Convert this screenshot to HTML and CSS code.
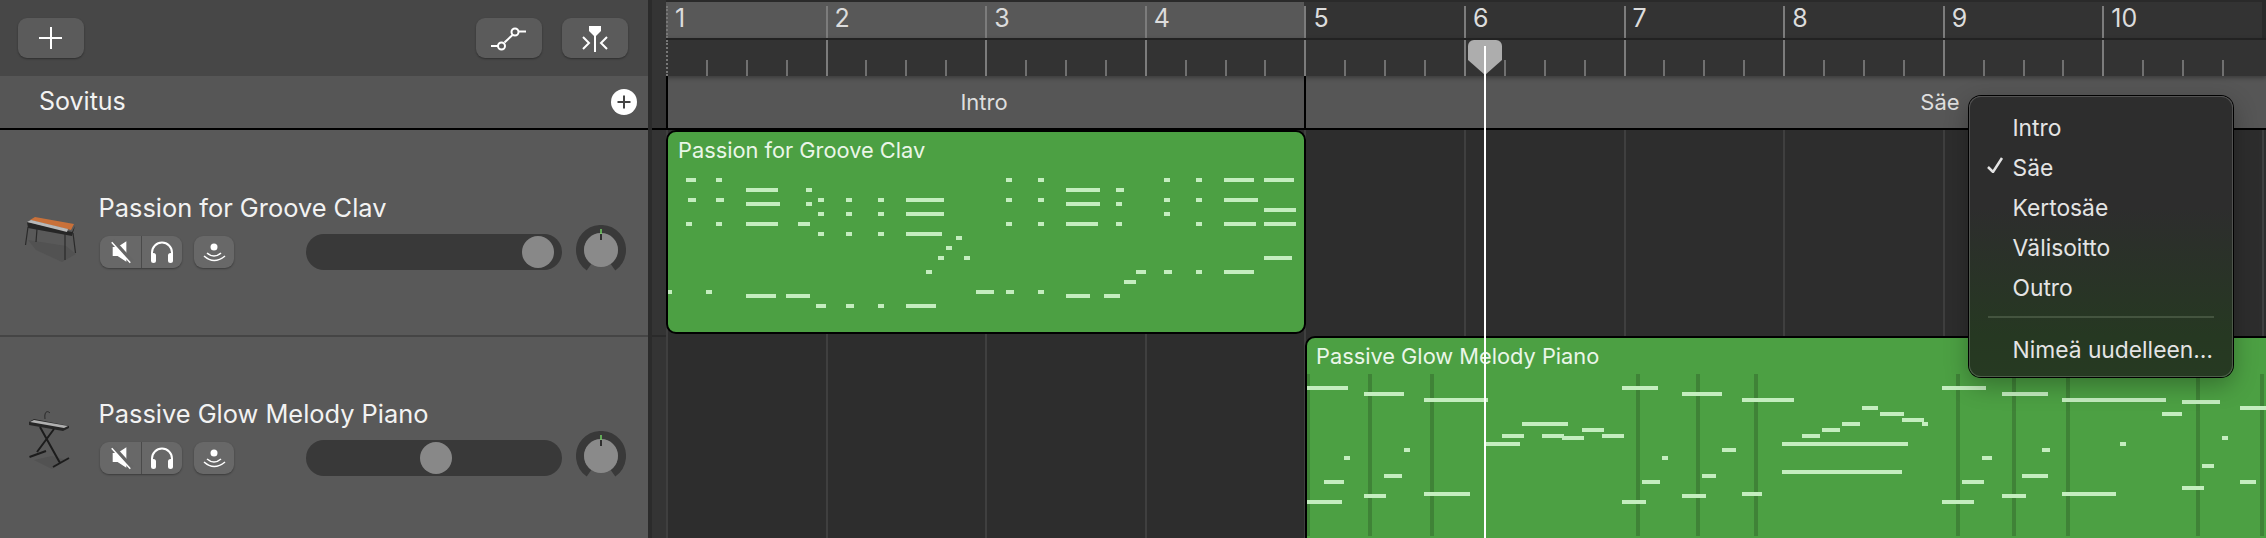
FILE: index.html
```html
<!DOCTYPE html>
<html lang="fi">
<head>
    <meta charset="UTF-8">
    <title>Sovitus</title>
    <link rel="stylesheet" href="styles.css">
</head>
<body>
    <div class="sidebar">
        <div class="toolbar">
            <button class="tool-btn">
                <svg width="66" height="40" viewBox="0 0 66 40"><path d="M33 9V31M21 20H44" class="line"/></svg>
            </button>
            <div class="toolbar-right">
                <button class="tool-btn">
                    <svg width="66" height="40" viewBox="0 0 66 40"><path d="M15 28H22M28.5 24.5L36.5 17M43 13.500H50" class="line"/><circle cx="25.500" cy="28" r="3.500" class="line"/><circle cx="39" cy="14" r="3.500" class="line"/></svg>
                </button>
                <button class="tool-btn">
                    <svg width="66" height="40" viewBox="0 0 66 40"><path d="M27 8H39V13L34 18H32L27 13Z" fill="#fff"/><path d="M33 16V34M21 19L27 25L21 31M45 19L39 25L45 31" class="line"/></svg>
                </button>
            </div>
        </div>
        <div class="arrange-head">
            <span>Sovitus</span>
            <svg width="26" height="26" viewBox="0 0 26 26"><circle cx="13" cy="13" r="13" fill="#fff"/><path d="M13 6.500V19.500M6.500 13H19.500" stroke="#444" stroke-width="2"/></svg>
        </div>

        <div class="track">
            <svg class="track-icon" width="60" height="70" viewBox="24 198 60 70">
                <path d="M28 240L66 246L76 254L62 262L36 250Z" fill="#525252"/>
                <path d="M27 222L72 232L75 226L72 236L28 228Z" fill="#262626"/>
                <path d="M30 220L35 217L74 224L71 230Z" fill="#c9713a"/>
                <path d="M27 222L31 220L68 229L67 232Z" fill="#b8b8b8"/>
                <path d="M28 227L25.500 245M37 229L36 242M65 233V260M73 233L75.500 253" stroke="#2a2a2a" stroke-width="1.200" fill="none"/>
            </svg>
            <div class="track-body">
                <div class="track-name">Passion for Groove Clav</div>
                <div class="track-controls">
                    <div class="btn-group">
                        <button class="mini-btn mute">
                            <svg width="42" height="32" viewBox="0 0 42 32"><path d="M13 11H18L27 5V26L18 20H13Z" fill="#fff"/><path d="M13 4L33 26" stroke="#666" stroke-width="4"/><path d="M12 6L31 27" stroke="#fff" stroke-width="1.500"/></svg>
                        </button>
                        <button class="mini-btn solo">
                            <svg width="40" height="32" viewBox="0 0 40 32"><path d="M10 23V16.500A10 10 0 0 1 30 16.500V23" class="line"/><rect x="9" y="17" width="5" height="10" rx="2.500" fill="#fff"/><rect x="26" y="17" width="5" height="10" rx="2.500" fill="#fff"/></svg>
                        </button>
                    </div>
                    <button class="mini-btn monitor">
                        <svg width="40" height="32" viewBox="0 0 40 32"><circle cx="20" cy="11" r="3.500" fill="#fff"/><path d="M13 17Q20 23 27 17M10 20Q20 29 31 20" class="line thin"/></svg>
                    </button>
                    <div class="slider"><div class="thumb" style="margin-left:216px"></div></div>
                    <svg class="knob" width="50" height="54" viewBox="0 0 50 54"><path d="M13 42.200A21 21 0 1 1 37 42.200" fill="none" stroke="#393939" stroke-width="8"/><circle cx="25" cy="25" r="17" fill="#8a8a8a"/><path d="M25 4V9" stroke="#72d062" stroke-width="1.500"/><path d="M25 9V15" stroke="#111" stroke-width="1.500"/></svg>
                </div>
            </div>
        </div>

        <div class="track">
            <svg class="track-icon" width="60" height="70" viewBox="24 405 60 70">
                <path d="M34 460L52 456L66 460L52 469Z" fill="#525252"/>
                <path d="M45 419C44 412 47 410 50 413" stroke="#2a2a2a" stroke-width="1" fill="none"/>
                <path d="M29 422L34 419L69 426V428L63 431L29 425Z" fill="#262626"/>
                <path d="M30 422L34 420L68 426L64 428Z" fill="#b0b0b0"/>
                <path d="M40 427L60 463M54 429L37 452M29.500 457L46 451M53 467L69 458" stroke="#1c1c1c" stroke-width="2" fill="none"/>
            </svg>
            <div class="track-body">
                <div class="track-name">Passive Glow Melody Piano</div>
                <div class="track-controls">
                    <div class="btn-group">
                        <button class="mini-btn mute">
                            <svg width="42" height="32" viewBox="0 0 42 32"><path d="M13 11H18L27 5V26L18 20H13Z" fill="#fff"/><path d="M13 4L33 26" stroke="#666" stroke-width="4"/><path d="M12 6L31 27" stroke="#fff" stroke-width="1.500"/></svg>
                        </button>
                        <button class="mini-btn solo">
                            <svg width="40" height="32" viewBox="0 0 40 32"><path d="M10 23V16.500A10 10 0 0 1 30 16.500V23" class="line"/><rect x="9" y="17" width="5" height="10" rx="2.500" fill="#fff"/><rect x="26" y="17" width="5" height="10" rx="2.500" fill="#fff"/></svg>
                        </button>
                    </div>
                    <button class="mini-btn monitor">
                        <svg width="40" height="32" viewBox="0 0 40 32"><circle cx="20" cy="11" r="3.500" fill="#fff"/><path d="M13 17Q20 23 27 17M10 20Q20 29 31 20" class="line thin"/></svg>
                    </button>
                    <div class="slider"><div class="thumb" style="margin-left:114px"></div></div>
                    <svg class="knob" width="50" height="54" viewBox="0 0 50 54"><path d="M13 42.200A21 21 0 1 1 37 42.200" fill="none" stroke="#393939" stroke-width="8"/><circle cx="25" cy="25" r="17" fill="#8a8a8a"/><path d="M25 4V9" stroke="#72d062" stroke-width="1.500"/><path d="M25 9V15" stroke="#111" stroke-width="1.500"/></svg>
                </div>
            </div>
        </div>
    </div>

    <div class="strip"></div>

    <div class="timeline">
        <div class="ruler-top">
            <div class="bar-num cycle"><span>1</span></div>
            <div class="bar-num cycle"><span>2</span></div>
            <div class="bar-num cycle"><span>3</span></div>
            <div class="bar-num cycle"><span>4</span></div>
            <div class="bar-num"><span>5</span></div>
            <div class="bar-num"><span>6</span></div>
            <div class="bar-num"><span>7</span></div>
            <div class="bar-num"><span>8</span></div>
            <div class="bar-num"><span>9</span></div>
            <div class="bar-num"><span>10</span></div>
        </div>
        <div class="ruler-ticks">
            <div class="bar-ticks"><i></i><i></i><i></i><i></i></div>
            <div class="bar-ticks"><i></i><i></i><i></i><i></i></div>
            <div class="bar-ticks"><i></i><i></i><i></i><i></i></div>
            <div class="bar-ticks"><i></i><i></i><i></i><i></i></div>
            <div class="bar-ticks"><i></i><i></i><i></i><i></i></div>
            <div class="bar-ticks"><i></i><i></i><i></i><i></i></div>
            <div class="bar-ticks"><i></i><i></i><i></i><i></i></div>
            <div class="bar-ticks"><i></i><i></i><i></i><i></i></div>
            <div class="bar-ticks"><i></i><i></i><i></i><i></i></div>
            <div class="bar-ticks"><i></i><i></i><i></i><i></i></div>
        </div>
        <div class="sections">
            <div class="section section-intro">Intro</div>
            <div class="section section-verse">Säe</div>
        </div>
        <div class="lanes">
            <div class="lane">
                <div class="region region-first">
                    <svg class="notes" width="636" height="200" viewBox="668 132 636 200">
                        <path class="note" d="M686 180H696M716 180H722M1006 180H1012M1038 180H1044M1164 180H1170M1196 180H1202M1224 180H1254M1264 180H1294
                            M746 190H778M806 190H812M1066 190H1100M1116 190H1124
                            M688 200H696M716 200H724M818 200H824M846 200H852M878 200H884M906 200H944M1006 200H1012M1038 200H1044M1164 200H1170M1196 200H1202M1224 200H1258
                            M746 204H780M806 204H812M1066 204H1100M1116 204H1122
                            M1264 210H1296
                            M818 214H824M846 214H852M878 214H884M906 214H944M1164 214H1170
                            M686 224H692M716 224H722M746 224H778M798 224H810M1006 224H1012M1038 224H1044M1066 224H1098M1116 224H1122M1196 224H1202M1224 224H1256M1264 224H1296
                            M818 234H824M846 234H852M878 234H884M906 234H942
                            M956 238H962M946 248H952M938 258H944M964 258H970M1264 258H1292
                            M926 272H932M1136 272H1146M1164 272H1172M1196 272H1202M1224 272H1254
                            M1124 282H1136
                            M668 292H672M706 292H712M976 292H994M1006 292H1014M1038 292H1044
                            M746 296H776M786 296H810M1066 296H1090M1104 296H1120
                            M816 306H826M846 306H854M878 306H884M906 306H936"/>
                    </svg>
                    <div class="region-title">Passion for Groove Clav</div>
                </div>
            </div>
            <div class="lane">
                <div class="region region-second">
                    <svg class="notes" width="961" height="210" viewBox="1307 338 961 210">
                        <path class="note-stem" d="M1308 374V536M1370 374V536M1432 374V536M1638 374V536M1698 374V536M1756 374V536M1958 374V536M2014 374V536M2068 374V536M2198 374V536M2262 374V536"/>
                        <path class="note" d="M1306 388H1348M1622 388H1658M1942 388H1986
                            M1364 394H1404M1682 394H1722M2002 394H2048
                            M1424 400H1488M1742 400H1794M2062 400H2166
                            M2182 402H2220
                            M1862 408H1878M2240 408H2266
                            M1880 414H1904M2162 414H2182
                            M1902 420H1924
                            M1522 424H1568M1842 424H1860M1922 424H1928
                            M1582 430H1604M1822 430H1840
                            M1502 436H1524M1542 436H1564M1602 436H1624M1802 436H1820
                            M1562 438H1584M2222 438H2228
                            M1486 444H1520M1782 444H1908M2120 444H2126
                            M1404 450H1410M1722 450H1736M2042 450H2050
                            M1344 458H1350M1662 458H1668M1982 458H1992
                            M2202 466H2214
                            M1782 472H1902
                            M1384 476H1402M1702 476H1716M2022 476H2048
                            M1324 482H1344M1642 482H1660M1962 482H1984M2240 482H2256
                            M2182 488H2204
                            M1424 494H1470M1742 494H1762M2062 494H2116
                            M1364 496H1386M1682 496H1706M2002 496H2026
                            M1306 502H1342M1622 502H1646M1942 502H1974"/>
                    </svg>
                    <div class="region-title">Passive Glow Melody Piano</div>
                </div>
            </div>
        </div>

        <div class="playhead"></div>
        <svg class="playhead-cap" width="34" height="35" viewBox="0 0 34 35"><path d="M6 0H28A6 6 0 0 1 34 6V20L17 35L0 20V6A6 6 0 0 1 6 0Z" fill="#adadad"/></svg>

        <div class="menu">
            <div class="menu-item">Intro</div>
            <div class="menu-item">
                <svg class="check" width="18" height="16" viewBox="0 0 18 16"><path d="M2 10L7 15L16 1" fill="none" stroke="#e4e4e4" stroke-width="2.500"/></svg>
                Säe
            </div>
            <div class="menu-item">Kertosäe</div>
            <div class="menu-item">Välisoitto</div>
            <div class="menu-item">Outro</div>
            <div class="menu-sep"></div>
            <div class="menu-item">Nimeä uudelleen…</div>
        </div>
    </div>
</body>
</html>
```
FILE: styles.css
```css
html, body {
    height: 100%;
}
body {
    margin: 0;
    display: flex;
    height: 538px;
    overflow: hidden;
    background: #2d2d2d;
    font-family: Inter, "Noto Sans", sans-serif;
    color: #f2f2f2;
}
button {
    padding: 0;
    border: none;
    display: flex;
    align-items: center;
    justify-content: center;
    background: none;
}
svg {
    display: block;
}
.line {
    fill: none;
    stroke: #fff;
    stroke-width: 2;
}
.line.thin {
    stroke-width: 1.5;
}

/* left column */
.sidebar {
    width: 648px;
    flex: none;
    background: #595959;
}
.toolbar {
    height: 76px;
    box-sizing: border-box;
    padding: 18px 20px 0 18px;
    display: flex;
    justify-content: space-between;
    background: #474747;
}
.toolbar-right {
    display: flex;
    gap: 20px;
}
.tool-btn {
    width: 66px;
    height: 40px;
    border-radius: 9px;
    background: #5b5b5b;
    box-shadow: 0 1px 2px rgba(0, 0, 0, 0.35);
}
.arrange-head {
    height: 50px;
    padding: 0 11px 2px 39px;
    display: flex;
    align-items: center;
    justify-content: space-between;
    background: #565656;
    border-bottom: 2px solid #000;
    font-size: 25px;
}
.arrange-head svg {
    margin-top: 2px;
}
.track {
    height: 207px;
    box-sizing: border-box;
    display: flex;
    align-items: flex-start;
    padding: 64px 0 0 24px;
    border-bottom: 2px solid #454545;
}
.track + .track {
    padding-top: 63px;
}
.track-icon {
    flex: none;
    margin-top: 4px;
}
.track + .track .track-icon {
    margin-top: 5px;
}
.track-body {
    margin-left: 14.500px;
}
.track-name {
    height: 28px;
    line-height: 28px;
    font-size: 25.400px;
    margin-bottom: 12px;
}
.track-controls {
    height: 36px;
    display: flex;
    align-items: center;
    padding-left: 1.500px;
}
.btn-group {
    display: flex;
    border-radius: 9px;
    overflow: hidden;
    box-shadow: 0 1px 2px rgba(0, 0, 0, 0.35);
}
.mini-btn {
    height: 32px;
    background: #686868;
}
.mute {
    width: 42px;
    border-right: 1px solid #4a4a4a;
}
.solo {
    width: 40px;
}
.monitor {
    width: 40px;
    margin-left: 12px;
    border-radius: 9px;
    box-shadow: 0 1px 2px rgba(0, 0, 0, 0.35);
}
.slider {
    width: 256px;
    height: 36px;
    margin-left: 72px;
    display: flex;
    align-items: center;
    border-radius: 18px;
    background: #393939;
}
.thumb {
    width: 32px;
    height: 32px;
    border-radius: 50%;
    background: #888;
}
.knob {
    margin: -9px 0 -9px 14px;
    flex: none;
}

.strip {
    width: 18px;
    flex: none;
    background: linear-gradient(#343434 128px, #000 128px, #000 130px, #343434 130px, #343434 335px, #2a2a2a 335px, #2a2a2a 337px, #343434 337px);
    border-left: 4px solid #2b2b2b;
    box-sizing: border-box;
}

/* timeline */
.timeline {
    position: relative;
    flex: 1;
    min-width: 0;
    overflow: hidden;
}
.ruler-top {
    height: 36px;
    padding-top: 2px;
    display: flex;
    background: #2a2a2a;
}
.bar-num {
    width: 159.6px;
    flex: none;
    box-sizing: border-box;
    background: #333;
    padding: 4px 0 0;
}
.bar-num.cycle {
    background: #585858;
}
.bar-num span {
    display: block;
    height: 32px;
    box-sizing: border-box;
    padding-left: 7px;
    border-left: 2px solid #7c7c7c;
    font-size: 25px;
    line-height: 25px;
    color: #dcdcdc;
}
.ruler-ticks {
    height: 36px;
    display: flex;
    background: #333;
    border-top: 2px solid #222;
    box-shadow: 0 2px 4px rgba(0, 0, 0, 0.3);
    position: relative;
}
.bar-ticks {
    width: 159.6px;
    flex: none;
    display: flex;
    align-items: flex-end;
}
.bar-ticks i {
    width: 25%;
    height: 16px;
    box-sizing: border-box;
    border-left: 2px solid #707070;
}
.bar-ticks i:first-child {
    height: 36px;
    border-left-color: #7c7c7c;
}
.bar-num:first-child span,
.bar-ticks:first-child i:first-child {
    border-left: 2px dotted #777;
}
.sections {
    height: 52px;
    display: flex;
    background: #565656;
    border-bottom: 2px solid #000;
}
.section {
    flex: none;
    display: flex;
    align-items: center;
    justify-content: center;
    box-sizing: border-box;
    border-left: 2px solid #000;
    font-size: 22px;
    color: #dedede;
}
.section-intro {
    width: 638px;
    padding-right: 4px;
}
.section-verse {
    width: 1270px;
}
.lanes {
    height: 408px;
    background: repeating-linear-gradient(90deg, #3f3f3f 0, #3f3f3f 2px, transparent 2px, transparent 159.6px);
}
.lane {
    height: 206px;
}
.region {
    position: relative;
    box-sizing: border-box;
    border: 2px solid #000;
    border-radius: 10px;
    background: #4ca043;
    overflow: hidden;
}
.region-first {
    width: 640px;
    height: 204px;
}
.region-second {
    width: 990px;
    height: 214px;
    margin-left: 639px;
}
.notes {
    position: absolute;
    left: 0;
    top: 0;
}
.note {
    fill: none;
    stroke: #c4edbf;
    stroke-width: 4;
    shape-rendering: crispEdges;
}
.note-stem {
    fill: none;
    stroke: #3f8337;
    stroke-width: 4;
    shape-rendering: crispEdges;
}
.region-title {
    position: relative;
    padding: 6px 0 0 10px;
    line-height: 24px;
    font-size: 21.800px;
    color: #eaf6e8;
}
.region-second .region-title {
    padding-left: 9px;
}

.playhead {
    position: absolute;
    left: 818px;
    top: 46px;
    bottom: 0;
    width: 2px;
    background: #fff;
    z-index: 2;
}
.playhead-cap {
    position: absolute;
    left: 802px;
    top: 40px;
    z-index: 1;
}

.menu {
    position: absolute;
    left: 1303px;
    top: 96px;
    width: 264px;
    height: 281px;
    box-sizing: border-box;
    padding: 12px 0 8px;
    border-radius: 12px;
    background: linear-gradient(#2d2d2d 0, #2d2d2d 40%, #263822 85%, #263a22 100%);
    box-shadow: 0 0 0 1px #000, inset 0 0 0 1px rgba(255, 255, 255, 0.18), 0 8px 24px rgba(0, 0, 0, 0.3);
    z-index: 3;
}
.menu-item {
    position: relative;
    height: 40px;
    padding-left: 43.500px;
    line-height: 40px;
    font-size: 22.800px;
    color: #e4e4e4;
}
.check {
    position: absolute;
    left: 17px;
    top: 9px;
}
.menu-sep {
    height: 2px;
    margin: 8px 19px 12px;
    background: #44543f;
}
```
